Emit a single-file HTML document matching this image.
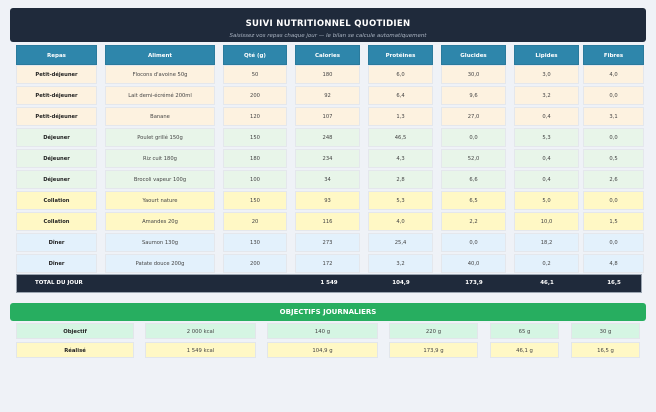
<!DOCTYPE html>
<html><head><meta charset="utf-8"><style>
*{margin:0;padding:0;box-sizing:border-box}
body{width:656px;height:412px;background:#eff2f7;font-family:"DejaVu Sans","Liberation Sans",sans-serif;position:relative;overflow:hidden;color:#333}
.hd{position:absolute;left:10px;top:8px;width:636px;height:34px;background:#1f2a3b;border-radius:3px;text-align:center;color:#fff}
.hd .t{font-size:8.5px;font-weight:bold;position:absolute;top:11px;width:100%;letter-spacing:.3px}
.hd .s{font-size:5.5px;font-style:italic;color:#aab4c2;position:absolute;top:25px;width:100%}
.r{position:absolute;left:0;width:656px;height:19px}
.r div{position:absolute;top:0;height:19px;line-height:19px;text-align:center;font-size:5.2px;border:1px solid #e4e7ec;color:#444}
.h div{background:#2e86ab;color:#fff;font-weight:bold;border-color:#2a7a9c;height:20px;line-height:20px;font-size:5.5px}
.a{left:16px;width:81px;font-weight:bold;color:#222!important}
.b{left:105px;width:110px}.c{left:223px;width:64px}.d{left:295px;width:65px}.e{left:368px;width:65px}.f{left:441px;width:65px}.g{left:514px;width:65px}.i{left:583px;width:61px}
.p div{background:#fdf2e0}.j div{background:#e8f5e9}.k div{background:#fff8c5}.n div{background:#e3f1fc}
.tot{position:absolute;left:16px;top:274px;width:626px;height:19px;background:#1f2a3b;color:#fff;font-size:5.5px;font-weight:bold;border:1px solid #9aa4b0}
.tot span{position:absolute;top:5px;transform:translateX(-50%)}
.ob{position:absolute;left:10px;top:303px;width:636px;height:18px;background:#27ae60;border-radius:3px;color:#fff;font-weight:bold;font-size:7px;text-align:center;line-height:18px}
.o{position:absolute;height:16px;line-height:16px;text-align:center;font-size:5.3px;border:1px solid #e2e6ea;color:#444}
.o1{background:#d5f5e3}.o2{background:#fff8c5}
</style></head><body>
<div class="hd"><div class="t">SUIVI NUTRITIONNEL QUOTIDIEN</div><div class="s">Saisissez vos repas chaque jour — le bilan se calcule automatiquement</div></div>
<div class="r h" style="top:45px"><div class="a" style="color:#fff!important">Repas</div><div class="b">Aliment</div><div class="c">Qté (g)</div><div class="d">Calories</div><div class="e">Protéines</div><div class="f">Glucides</div><div class="g">Lipides</div><div class="i">Fibres</div></div>
<div class="r p" style="top:65px"><div class="a">Petit-déjeuner</div><div class="b">Flocons d'avoine 50g</div><div class="c">50</div><div class="d">180</div><div class="e">6,0</div><div class="f">30,0</div><div class="g">3,0</div><div class="i">4,0</div></div>
<div class="r p" style="top:86px"><div class="a">Petit-déjeuner</div><div class="b">Lait demi-écrémé 200ml</div><div class="c">200</div><div class="d">92</div><div class="e">6,4</div><div class="f">9,6</div><div class="g">3,2</div><div class="i">0,0</div></div>
<div class="r p" style="top:107px"><div class="a">Petit-déjeuner</div><div class="b">Banane</div><div class="c">120</div><div class="d">107</div><div class="e">1,3</div><div class="f">27,0</div><div class="g">0,4</div><div class="i">3,1</div></div>
<div class="r j" style="top:128px"><div class="a">Déjeuner</div><div class="b">Poulet grillé 150g</div><div class="c">150</div><div class="d">248</div><div class="e">46,5</div><div class="f">0,0</div><div class="g">5,3</div><div class="i">0,0</div></div>
<div class="r j" style="top:149px"><div class="a">Déjeuner</div><div class="b">Riz cuit 180g</div><div class="c">180</div><div class="d">234</div><div class="e">4,3</div><div class="f">52,0</div><div class="g">0,4</div><div class="i">0,5</div></div>
<div class="r j" style="top:170px"><div class="a">Déjeuner</div><div class="b">Brocoli vapeur 100g</div><div class="c">100</div><div class="d">34</div><div class="e">2,8</div><div class="f">6,6</div><div class="g">0,4</div><div class="i">2,6</div></div>
<div class="r k" style="top:191px"><div class="a">Collation</div><div class="b">Yaourt nature</div><div class="c">150</div><div class="d">93</div><div class="e">5,3</div><div class="f">6,5</div><div class="g">5,0</div><div class="i">0,0</div></div>
<div class="r k" style="top:212px"><div class="a">Collation</div><div class="b">Amandes 20g</div><div class="c">20</div><div class="d">116</div><div class="e">4,0</div><div class="f">2,2</div><div class="g">10,0</div><div class="i">1,5</div></div>
<div class="r n" style="top:233px"><div class="a">Dîner</div><div class="b">Saumon 130g</div><div class="c">130</div><div class="d">273</div><div class="e">25,4</div><div class="f">0,0</div><div class="g">18,2</div><div class="i">0,0</div></div>
<div class="r n" style="top:254px"><div class="a">Dîner</div><div class="b">Patate douce 200g</div><div class="c">200</div><div class="d">172</div><div class="e">3,2</div><div class="f">40,0</div><div class="g">0,2</div><div class="i">4,8</div></div>
<div class="tot"><span style="transform:none;left:18px">TOTAL DU JOUR</span><span style="left:312px">1 549</span><span style="left:384px">104,9</span><span style="left:457px">173,9</span><span style="left:530px">46,1</span><span style="left:597px">16,5</span></div>
<div class="ob">OBJECTIFS JOURNALIERS</div>
<div class="o o1" style="left:16px;top:323px;width:118px;font-weight:bold;color:#222">Objectif</div>
<div class="o o1" style="left:145px;top:323px;width:111px">2 000 kcal</div>
<div class="o o1" style="left:267px;top:323px;width:111px">140 g</div>
<div class="o o1" style="left:389px;top:323px;width:89px">220 g</div>
<div class="o o1" style="left:490px;top:323px;width:69px">65 g</div>
<div class="o o1" style="left:571px;top:323px;width:69px">30 g</div>
<div class="o o2" style="left:16px;top:342px;width:118px;font-weight:bold;color:#222">Réalisé</div>
<div class="o o2" style="left:145px;top:342px;width:111px">1 549 kcal</div>
<div class="o o2" style="left:267px;top:342px;width:111px">104,9 g</div>
<div class="o o2" style="left:389px;top:342px;width:89px">173,9 g</div>
<div class="o o2" style="left:490px;top:342px;width:69px">46,1 g</div>
<div class="o o2" style="left:571px;top:342px;width:69px">16,5 g</div>
</body></html>
